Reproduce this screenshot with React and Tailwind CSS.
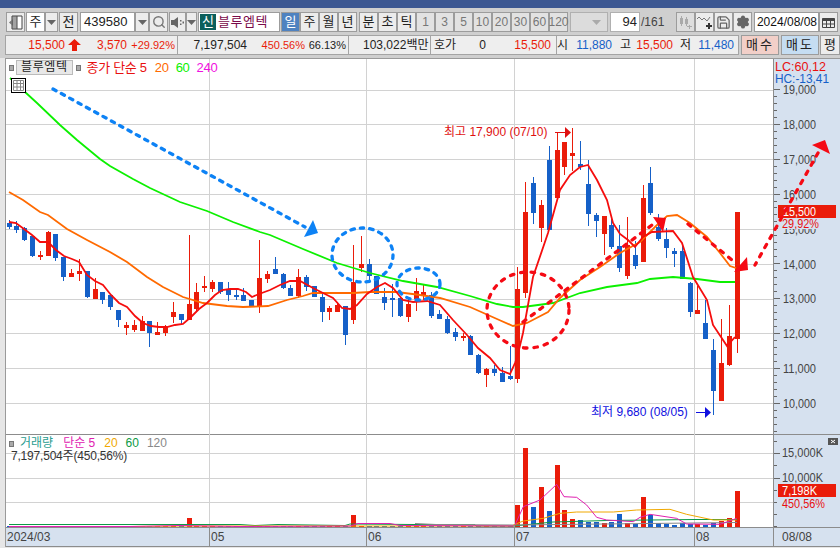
import React from 'react';
import { Search, Save, Settings } from 'lucide-react';

const RED = '#ea1c0a';
const BLUE = '#1560c8';
const FONT = '"Liberation Sans", "Noto Sans CJK KR", sans-serif';

// [x, bodyTop, bodyBottom, wickTop, wickBottom, r|b] read off the zoomed crops
const groupA = [
  [28,68,80,60,87,'b'],[49,78,90,64,98,'b'],[73,85,120,82,124,'b'],[97,108,167,106,171,'b'],[121,165,167,153,180,'r'],
  [145,96,167,93,167,'r'],[166,102,173,102,183,'b'],[190,171,230,171,243,'b'],[214,219,231,207,231,'r'],[238,213,222,178,243,'r'],
  [262,213,291,213,294,'b'],[286,267,297,235,297,'r'],[307,276,300,276,312,'b'],[331,285,321,285,330,'b'],[355,330,360,330,381,'b'],
  [379,375,384,366,405,'r'],[403,375,390,360,396,'r'],[427,363,393,348,393,'r'],[448,363,399,363,441,'b'],[472,396,405,366,405,'r'],
  [496,381,399,375,408,'r'],[520,336,351,306,369,'r'],[544,342,360,342,375,'b'],[568,312,360,105,360,'r'],[589,276,327,249,336,'r'],
  [613,258,264,228,276,'r'],[637,246,267,240,276,'r'],[661,246,276,246,282,'b'],[685,267,285,246,303,'b'],[709,285,288,267,300,'b'],
  [730,285,303,264,303,'b'],[754,300,321,300,321,'b'],[778,234,318,120,339,'r'],[802,222,237,213,249,'r'],
].map(([x, a, b, c, d, k]) => [x / 3, 200 + a / 3, 200 + b / 3, 200 + c / 3, 200 + d / 3, k]);

const groupB = [
  [16,177,192,141,192,'b'],[40,192,234,189,237,'b'],[61,234,258,225,258,'b'],[85,201,258,177,264,'r'],[109,201,231,195,243,'b'],
  [133,228,261,228,261,'b'],[157,261,306,252,336,'b'],[178,294,306,288,330,'r'],[202,285,306,276,306,'r'],[226,288,375,288,405,'b'],
  [250,216,330,105,342,'r'],[274,162,174,78,186,'r'],[298,162,198,147,219,'b'],[319,198,252,198,252,'b'],[343,261,279,234,300,'b'],
  [367,264,266,222,321,'b'],[391,264,318,261,321,'b'],[415,282,321,261,336,'r'],[439,243,267,204,303,'r'],[460,246,258,222,270,'r'],
  [484,255,318,246,324,'b'],[508,312,327,300,327,'b'],[532,327,369,318,372,'b'],[556,366,381,354,393,'b'],[580,378,384,369,393,'r'],
  [601,378,435,375,435,'b'],[625,435,489,432,492,'b'],[649,477,495,474,531,'r'],[673,477,489,465,498,'b'],[697,489,516,471,516,'b'],
  [721,498,507,408,510,'b'],
].map(([x, a, b, c, d, k]) => [270 + x / 3, 210 + a / 3, 210 + b / 3, 210 + c / 3, 210 + d / 3, k]);

const groupC = [
  [112,537,807,471,819,'r',225],[136,306,549,216,564,'r',54],[160,219,309,201,342,'b',231],[184,285,354,270,396,'r',171],[208,150,360,108,360,'b',243],
  [232,120,264,69,264,'r',105],[253,96,171,96,195,'r',240],[277,129,137,54,183,'r',267],[301,162,171,93,180,'b',270],[325,222,312,150,348,'b',276],
  [349,315,333,309,381,'b',276],[373,318,372,318,435,'r',279],[394,345,411,324,417,'b',276],[418,408,474,345,486,'b',252],[442,405,498,321,507,'r',279],
  [466,435,468,393,477,'b',282],[490,264,456,225,456,'r',201],[511,219,309,171,315,'b',255],[535,351,387,312,393,'b',279],[559,387,414,354,444,'b',282],
  [583,423,431,414,471,'b',285],[607,423,507,399,507,'b',279],[631,519,606,516,621,'b',282],[652,600,612,528,612,'r',282],[676,639,687,570,687,'b',285],
  [700,720,843,687,915,'b',279],[724,759,873,627,873,'r',273],[748,678,765,585,768,'r',264],[772,306,687,306,729,'r',183],
].map(([x, a, b, c, d, k, v]) => [480 + x / 3, 110 + a / 3, 110 + b / 3, 110 + c / 3, 110 + d / 3, k, (291 - v) / 3]);

const candles = [...groupA, ...groupB, ...groupC];

const volumeOf = (c) => {
  if (c[6]) return c[6];
  const x = Math.round(c[0]);
  if (x === 189) return 9;
  if (x === 353) return 12;
  if (x === 362) return 3;
  if (x === 257) return 4;
  return 1;
};

const ma5 = '9,222 16,223 24,229 32,235 40,242 48,242 56,250 64,256 72,259 79,262 87,275 95,281 103,285 111,295 119,303 127,307 135,316 143,323 151,326 159,327 167,327 175,325 183,324 191,317 199,309 207,303 215,295 222,290 230,289 238,289 246,292 252,297 259,294 270,290 280,285 290,281 300,281 313,288 323,293 333,298 342,308 350,309 357,305 367,294 377,287 385,283 393,288 403,300 413,302 427,301 440,305 453,320 467,335 478,348 490,358 500,370 510,374 515,363 517,358 523,333 533,277 548,233 560,190 570,175 580,167 588,165 597,180 607,200 613,223 620,234 628,240 635,247 643,237 652,232 673,231 682,243 693,277 707,300 713,325 727,346 735,337';
const ma20 = '9,192 23,200 40,212 48,215 67,229 87,240 110,252 127,262 147,277 163,287 183,297 203,303 227,306 243,307 268,306 287,300 303,296 313,293 353,293 370,292 397,292 420,295 440,298 470,307 497,319 513,326 527,323 548,312 560,298 580,280 600,267 620,253 640,242 657,225 667,216 677,215 690,223 707,237 720,253 730,266 736,268';
const ma60 = '10,78 25,92 37,103 60,125 77,140 100,159 110,166 133,179 150,188 180,202 207,211 233,222 260,232 270,235 303,249 337,263 370,273 403,281 437,287 470,296 497,304 513,307 523,307 553,303 580,293 607,287 637,283 650,279 673,277 697,279 720,282 735,282';

const volLine = (s) => s.split(' ').map((p) => {
  const [x, y] = p.split(',');
  return `${420 + x / 3},${430 + y / 3}`;
}).join(' ');

const priceTicks = [19, 18, 17, 16, 15, 14, 13, 12, 11, 10];

const Caret = ({ color = '#666' }) => (
  <svg width="9" height="5" viewBox="0 0 9 5"><path d="M0 0h9L4.5 5z" fill={color} /></svg>
);

const Btn = ({ w, bg = 'bg-[#ececec]', className = '', children }) => (
  <div style={{ width: w }} className={`flex h-[20px] shrink-0 items-center justify-center border border-[#9c9c9c] text-[13px] ${bg} ${className}`}>
    {children}
  </div>
);

const Cell = ({ w, color = '#222', right = true, className = '', children }) => (
  <span style={{ width: w, color }} className={`shrink-0 whitespace-nowrap ${right ? 'text-right' : ''} ${className}`}>{children}</span>
);

function Toolbar() {
  return (
    <div className="mt-[4px] flex h-[20px] pl-[6px] text-[13px] text-[#222]">
      <Btn w={19}>
        <svg width="15" height="15" viewBox="0 0 15 15">
          <path d="M4 1h10v13H4z" fill="#fff" stroke="#444" />
          <path d="M9 1v13" stroke="#444" />
          <path d="M1 7.5 5 4v7z" fill="#777" />
          <path d="M4 1h5v13H4z" fill="#555" opacity=".55" />
        </svg>
      </Btn>
      <Btn w={19} bg="bg-white" className="ml-[1px]">주</Btn>
      <Btn w={13}><Caret /></Btn>
      <Btn w={19} className="ml-[1px]">전</Btn>
      <Btn w={55} bg="bg-white" className="ml-[2px] !justify-start pl-[3px]">439580</Btn>
      <Btn w={14}><Caret /></Btn>
      <Btn w={19}><Search size={14} color="#777" strokeWidth={2.4} /></Btn>
      <Btn w={17} className="ml-[1px]">
        <svg width="13" height="13" viewBox="0 0 13 13"><path d="M0 4h3l4-3v11L3 9H0z" fill="#666" /><path d="M9 4h1.5v1.5H9zM9 7.5h1.5V9H9zM11.5 5.5H13V7.500h-1.500z" fill="#666" /></svg>
      </Btn>
      <Btn w={11}><Caret /></Btn>
      <div className="ml-[1px] flex h-[20px] w-[82px] shrink-0 items-center border border-[#9c9c9c] bg-white">
        <span className="ml-[1px] flex h-[16px] w-[16px] items-center justify-center bg-[#0b5f5b] text-[13px] text-white">신</span>
        <span className="ml-[2px] text-[13px] tracking-[0.5px] text-[#7a0a4a]">블루엠텍</span>
      </div>
      <Btn w={19} bg="bg-[#4f82c0]" className="ml-[1px] text-white">일</Btn>
      {['주', '월', '년'].map((t) => <Btn key={t} w={19}>{t}</Btn>)}
      <Btn w={19} className="ml-[2px]">분</Btn>
      {['초', '틱'].map((t) => <Btn key={t} w={19}>{t}</Btn>)}
      {['1', '3', '5', '10', '20', '30', '60', '120'].map((t) => (
        <Btn key={t} w={19} bg="bg-[#e2e2e2]" className="!text-[12px] text-[#777]">{t}</Btn>
      ))}
      <div className="ml-[2px] flex h-[20px] w-[38px] shrink-0 items-center justify-end border border-[#b0b0b0] bg-[#dcdcdc] pr-[6px]"><Caret color="#aaa" /></div>
      <div className="ml-[2px] flex h-[20px] w-[30px] shrink-0 items-center justify-end border border-[#b0b0b0] bg-white pr-[2px] text-[13px]">94</div>
      <span className="w-[26px] shrink-0 pl-[1px] text-[12px] leading-[20px] text-[#444]">/161</span>
      <Btn w={19} bg="bg-[#dedede]" className="ml-[10px]">
        <svg width="15" height="15" viewBox="0 0 15 15" fill="#aaa"><path d="M3 1h1v2h1v6H4v2H3V9H2V3h1zM8 2h1v2h1v5H9v2H8V9H7V4h1z" /><path d="M11 10h1v1h2v1h-2v2h-1v-2H9v-1h2z" /></svg>
      </Btn>
      <Btn w={19}>
        <svg width="15" height="15" viewBox="0 0 15 15" fill="none"><path d="M0 4l2-2 3 3 2-2 3 3 3-4" stroke="#777" /><path d="M9 10h2V8h2v2h2v2h-2v2h-2v-2H9z" fill="#333" /></svg>
      </Btn>
      <Btn w={19}><Save size={15} color="#666" strokeWidth={2} /></Btn>
      <Btn w={19}><Settings size={14} color="#666" fill="#666" strokeWidth={2.4} /></Btn>
      <div className="ml-[2px] flex h-[20px] w-[65px] shrink-0 items-center justify-end border border-[#9c9c9c] bg-white pr-[1px] text-[12px] text-[#111]">2024/08/08</div>
      <Btn w={19}>
        <svg width="13" height="13" viewBox="0 0 13 13" fill="none"><path d="M.5 2.500h12v9H.5z" stroke="#444" /><path d="M.5 2.500h12V5H.5z" fill="#444" /><path d="M4.500 5v6M8.500 5v6M1 8h11" stroke="#444" /></svg>
      </Btn>
    </div>
  );
}

function InfoBar() {
  return (
    <div className="mt-[3px] flex h-[20px] pl-[5px] text-[12px] leading-[18px]">
      <div className="flex w-[173px] shrink-0 items-center border border-[#a4a4a4] bg-[#eeeeee]">
        <Cell w={59} color={RED}>15,500</Cell>
        <svg className="ml-[3px] shrink-0" width="13" height="12" viewBox="0 0 13 12"><path d="M6.500 0 13 6H9v6H4V6H0z" fill={RED} /></svg>
        <Cell w={46} color={RED}>3,570</Cell>
        <Cell w={48} color={RED} className="text-[11px]">+29.92%</Cell>
      </div>
      <div className="flex w-[171px] shrink-0 items-center border-y border-r border-[#a4a4a4] bg-[#eeeeee]">
        <Cell w={69}>7,197,504</Cell>
        <Cell w={58} color={RED} className="text-[11px]">450.56%</Cell>
        <Cell w={41} className="text-[11px]">66.13%</Cell>
      </div>
      <div className="flex w-[82px] shrink-0 items-center overflow-hidden border-y border-r border-[#a4a4a4] bg-[#eeeeee]">
        <Cell w={80} right={false}><span className="pl-[14px]">103,022백만</span></Cell>
      </div>
      <div className="flex w-[126px] shrink-0 items-center border-y border-r border-[#a4a4a4] bg-[#eeeeee]">
        <Cell w={26} right={false}><span className="pl-[3px]">호가</span></Cell>
        <Cell w={29}>0</Cell>
        <Cell w={65} color={RED}>15,500</Cell>
      </div>
      <div className="flex w-[182px] shrink-0 items-center border-y border-r border-[#a4a4a4] bg-[#eeeeee]">
        <Cell w={11}>시</Cell>
        <Cell w={44} color={BLUE}>11,880</Cell>
        <Cell w={19}>고</Cell>
        <Cell w={42} color={RED}>15,500</Cell>
        <Cell w={18}>저</Cell>
        <Cell w={43} color={BLUE}>11,480</Cell>
      </div>
      <Btn w={38} bg="bg-[#f2cfc8]" className="ml-[2px] tracking-[2px] text-[#222]">매수</Btn>
      <Btn w={38} bg="bg-[#c5ddf2]" className="ml-[2px] tracking-[2px] text-[#222]">매도</Btn>
      <Btn w={20} className="ml-[1px] text-[#222]">평</Btn>
    </div>
  );
}

function ChartDrawing() {
  return (
    <svg className="absolute inset-0 h-full w-full" viewBox="6 59 834 488" style={{ fontFamily: FONT }}>
      {/* grid */}
      {[90.5, 124.5, 159.5, 194.5, 229.5, 264.5, 299.5, 333.5, 368.5, 403.5, 453.5, 478.5, 502.5].map((y) => (
        <path key={y} d={`M6 ${y}H773`} stroke="#d2d2d2" shapeRendering="crispEdges" />
      ))}
      {[209.5, 366.5, 514.5, 694.5].map((x) => (
        <path key={x} d={`M${x} 58V527`} stroke="#d2d2d2" shapeRendering="crispEdges" />
      ))}

      {/* price axis */}
      {Array.from({ length: 50 }).map((_, i) => {
        const y = 89.5 + i * 6.97;
        return <path key={i} d={`M774 ${y}h${i % 5 === 0 ? 6 : 3}`} stroke="#666" shapeRendering="crispEdges" />;
      })}
      {priceTicks.map((p, i) => (
        <text key={p} x="783" y={94 + i * 34.9} fontSize="13" textLength="33" lengthAdjust="spacingAndGlyphs" fill="#444">{p},000</text>
      ))}

      {/* candles */}
      {candles.map(([x, top, bottom, wt, wb, k], i) => {
        const cx = Math.round(x);
        return (
          <g key={i} fill={k === 'r' ? RED : BLUE} shapeRendering="crispEdges">
            <rect x={cx} y={wt} width="1" height={wb - wt} />
            <rect x={cx - 2} y={top} width="5" height={Math.max(bottom - top, 2)} />
            <rect x={cx - 2} y={527 - volumeOf(candles[i])} width="5" height={volumeOf(candles[i])} />
          </g>
        );
      })}

      {/* moving averages */}
      <polyline points={ma60} fill="none" stroke="#0cf000" strokeWidth="1.8" />
      <polyline points={ma20} fill="none" stroke="#ff6a00" strokeWidth="1.8" />
      <polyline points={ma5} fill="none" stroke="#f50d0d" strokeWidth="1.8" />

      {/* volume averages */}
      <polyline points="9,524.500 240,524.500 255,525.500 278,524.500 345,525.500 350,524 437,524.700 475,524.700 476,526 514,526 553,522 607,520.500 694,519.500 737,519.500" fill="none" stroke="#0d9a45" strokeWidth="1" />
      <polyline points="9,526.500 130,526.500 185,526 240,526 350,526 514,526" fill="none" stroke="#f0a800" strokeWidth="1" />
      <polyline points="415,523.500 436,524.500 514,525 737,522.500" fill="none" stroke="#888" strokeWidth="1" />
      <polyline points={volLine('280,285 310,273 370,265 420,250 470,246 580,246 650,240 750,238 800,253 880,270 950,270')} fill="none" stroke="#f0a800" strokeWidth="1" />
      <polyline points="9,526.500 130,526.500 180,525.500 240,526.500 350,526 358,523.500 390,523.500 400,525.500 514,526" fill="none" stroke="#e020b0" strokeWidth="1" />
      <polyline points={volLine('285,285 310,230 360,210 410,163 432,200 470,202 500,225 530,262 560,270 640,275 660,262 690,253 770,265 800,282 900,283 950,265')} fill="none" stroke="#e020b0" strokeWidth="1" />

      {/* high / low marks */}
      <text x="444" y="136" fontSize="12" fill="#e01010">최고 17,900 (07/10)</text>
      <path d="M555 132.500h10" stroke="#e01010" />
      <path d="M565 127l6 5.500-6 5.500z" fill="#e01010" />
      <text x="591" y="416" fontSize="12" fill="#1010e0">최저 9,680 (08/05)</text>
      <path d="M696 412.500h10" stroke="#1010e0" />
      <path d="M705 407l6 5.500-6 5.500z" fill="#1010e0" />

      {/* hand drawn notes */}
      <g fill="none" stroke="#0d82f5" strokeWidth="3.300" strokeLinecap="round" strokeDasharray="3.500 6">
        <path d="M53 89 305 227" />
        <ellipse cx="362.500" cy="255" rx="30.500" ry="27" />
        <ellipse cx="418.500" cy="284" rx="21.500" ry="16" />
      </g>
      <path d="M313 220 318 233 304 237z" fill="#0d82f5" />
      <g fill="none" stroke="#f50a14" strokeWidth="3.300" strokeLinecap="round" strokeDasharray="3.500 7">
        <ellipse cx="528" cy="310" rx="41" ry="38" />
        <path d="M523 322 652 225" />
        <path d="M688 224 732 260" />
      </g>
      <path d="M653 217 666 218 663 232zM747 257 748 270 734 272zM825 140 830 154 812 145z" fill="#f50a14" />

      {/* covers on the axis */}
      <rect x="774" y="58" width="66" height="27" fill="#d6e1ef" />
      <text x="775" y="71" fontSize="13" textLength="51" lengthAdjust="spacingAndGlyphs" fill="#e81010">LC:60,12</text>
      <text x="775" y="83" fontSize="13" textLength="54" lengthAdjust="spacingAndGlyphs" fill="#1560c8">HC:-13,41</text>
      <rect x="778" y="205" width="58" height="13" fill={RED} shapeRendering="crispEdges" />
      <rect x="778" y="218" width="58" height="11" fill="#d6e1ef" />
      <text x="783" y="216" fontSize="13" textLength="33" lengthAdjust="spacingAndGlyphs" fill="#fff">15,500</text>
      <text x="782" y="228" fontSize="13" textLength="37" lengthAdjust="spacingAndGlyphs" fill="#e81010">29,92%</text>
      <path d="M818 153 755 265" fill="none" stroke="#f50a14" strokeWidth="3.300" strokeLinecap="round" strokeDasharray="3.500 7" />

      {/* volume axis */}
      {[441, 453, 465, 478, 490, 502, 514, 526].map((y, i) => (
        <path key={y} d={`M774 ${y + 0.5}h${i % 2 === 1 && i < 4 ? 6 : 3}`} stroke="#666" shapeRendering="crispEdges" />
      ))}
      <text x="782" y="457" fontSize="13" textLength="41" lengthAdjust="spacingAndGlyphs" fill="#444">15,000K</text>
      <text x="782" y="482" fontSize="13" textLength="41" lengthAdjust="spacingAndGlyphs" fill="#444">10,000K</text>
      <rect x="778" y="484" width="58" height="13" fill={RED} shapeRendering="crispEdges" />
      <text x="782" y="495" fontSize="13" textLength="35" lengthAdjust="spacingAndGlyphs" fill="#fff">7,198K</text>
      <text x="782" y="508" fontSize="13" textLength="43" lengthAdjust="spacingAndGlyphs" fill="#e81010">450,56%</text>
      <rect x="828" y="438" width="10" height="7" fill="#555" />
      <path d="M831 440l4 3M835 440l-4 3" stroke="#fff" />
    </svg>
  );
}

export default function App() {
  return (
    <div className="flex h-[548px] w-[840px] flex-col overflow-hidden bg-[#cfcfcf]" style={{ fontFamily: FONT }}>
      <div className="h-[8px] shrink-0 bg-[#3c5792]" />
      <Toolbar />
      <InfoBar />

      <div className="mt-[3px] flex flex-1 bg-[#e6e6e6] pb-[1px] pl-[5px]">
        <div className="relative flex flex-1 flex-col border-l border-t border-[#9a9a9a]">
          {/* price panel */}
          <div className="flex h-[376px] shrink-0 border-b border-[#8c8c8c]">
            <div className="flex-1 bg-white" />
            <div className="w-[67px] border-l border-[#8c8c8c] bg-[#d6e1ef]" />
          </div>
          {/* volume panel */}
          <div className="flex h-[93px] shrink-0 border-b border-[#8c8c8c]">
            <div className="flex-1 bg-white" />
            <div className="w-[67px] border-l border-[#8c8c8c] bg-[#d6e1ef]" />
          </div>
          {/* date axis */}
          <div className="flex h-[19px] shrink-0 border-b border-[#8c8c8c] bg-[#d6e1ef] text-[12px] leading-[18px] text-[#444]">
            <span className="w-[204px] shrink-0 border-r border-[#8c8c8c] pl-[1px]">2024/03</span>
            <span className="w-[157px] shrink-0 border-r border-[#8c8c8c] pl-[1px]">05</span>
            <span className="w-[148px] shrink-0 border-r border-[#8c8c8c] pl-[1px]">06</span>
            <span className="w-[180px] shrink-0 border-r border-[#8c8c8c] pl-[1px]">07</span>
            <span className="w-[79px] shrink-0 border-r border-[#8c8c8c] pl-[1px]">08</span>
            <span className="pl-[8px]">08/08</span>
          </div>

          <ChartDrawing />

          {/* price legend */}
          <div className="absolute left-[3px] top-[1px] flex items-center text-[13px] leading-[15px] tracking-[-0.3px]">
            <span className="h-[6px] w-[5px] border border-[#777] bg-[#aaa]" />
            <span className="ml-[2px] h-[15px] border border-[#bbb] bg-[#e8e8e8] px-[4px] text-[12px] leading-[13px] tracking-[0.6px] text-[#222]">블루엠텍</span>
            <span className="ml-[3px] h-[6px] w-[5px] border border-[#777] bg-[#aaa]" />
            <span className="ml-[6px] text-[#e81010]">종가 단순 5</span>
            <span className="ml-[8px] text-[#ff6a00]">20</span>
            <span className="ml-[7px] text-[#0cf000]">60</span>
            <span className="ml-[7px] text-[#f010e0]">240</span>
          </div>
          <div className="absolute left-[5px] top-[19px] flex h-[15px] w-[15px] items-center justify-center border border-black bg-white">
            <svg width="11" height="11" viewBox="0 0 11 11" fill="none" stroke="#888"><path d="M.5.500h10v10H.5zM4 .500v10M7.500.500v10M.5 3.500h10M.5 7h10" /></svg>
          </div>

          {/* volume legend */}
          <div className="absolute left-[3px] top-[378px] text-[12px] leading-[13px]">
            <div className="flex items-center">
              <span className="h-[6px] w-[5px] border border-[#777] bg-[#aaa]" />
              <span className="ml-[6px] text-[#2a9d8f]">거래량</span>
              <span className="ml-[10px] text-[#e020b0]">단순 5</span>
              <span className="ml-[9px] text-[#f0a800]">20</span>
              <span className="ml-[8px] text-[#0d9a45]">60</span>
              <span className="ml-[8px] text-[#888]">120</span>
            </div>
            <div className="ml-[2px] tracking-[-0.2px] text-[#333]">7,197,504주(450,56%)</div>
          </div>
        </div>
      </div>
    </div>
  );
}
